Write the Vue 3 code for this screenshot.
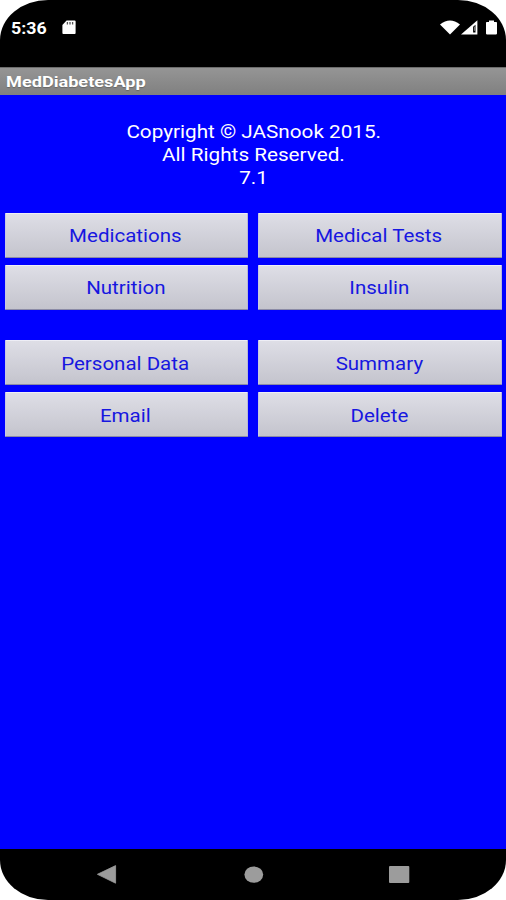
<script setup>
const groups = [
  ['Medications', 'Medical Tests', 'Nutrition', 'Insulin'],
  ['Personal Data', 'Summary', 'Email', 'Delete'],
]
const notice = ['Copyright © JASnook 2015.', 'All Rights Reserved.', '7.1']
</script>

<template>
  <div class="screen">
    <header class="status">
      <span class="time"><span class="wide">5:36</span></span>
      <svg class="sd" width="14" height="15" viewBox="0 0 14 15">
        <path d="M4.6 .5H12.6Q13.6 .5 13.6 1.5V13Q13.6 14 12.6 14H1.4Q.4 14 .4 13V5Z" fill="#fff" />
        <path d="M5.4 2V4.6M8 2V4.6M10.6 2V4.6" stroke="#555" stroke-width="1.3" />
      </svg>
      <svg class="signals" width="60" height="16" viewBox="0 0 60 16">
        <path d="M0 4.6Q10 -3.4 20 4.6L10 14.6Z" fill="#fff" />
        <path d="M21 14.5L37.4 .2V14.5Z" fill="#fff" />
        <path d="M33.1 6.8L35.5 4.8V12.4H33.1Z" fill="#000" />
        <path d="M34.6 6.6V10.8" stroke="#bbb" stroke-width=".7" />
        <path d="M46.8 2H49V.4H54V2H56.2Q57 2 57 2.8V13.6Q57 14.4 56.2 14.4H46.8Q46 14.4 46 13.6V2.8Q46 2 46.8 2Z" fill="#fff" />
      </svg>
    </header>
    <div class="title"><span class="wide">MedDiabetesApp</span></div>
    <main class="content">
      <div class="notice">
        <p v-for="line in notice" :key="line"><span class="wide">{{ line }}</span></p>
      </div>
      <div v-for="(group, i) in groups" :key="i" class="group">
        <button v-for="label in group" :key="label" type="button">
          <span class="wide">{{ label }}</span>
        </button>
      </div>
    </main>
    <nav class="nav">
      <svg width="506" height="51" viewBox="0 0 506 51">
        <path d="M97.4 25.3L115.6 16.6V34.2Z" fill="#9c9c9c" stroke="#9c9c9c" stroke-width=".8" stroke-linejoin="round" />
        <ellipse cx="253.8" cy="25.6" rx="9.4" ry="8.2" fill="#9c9c9c" />
        <rect x="389" y="17" width="20.3" height="17" rx="1" fill="#9c9c9c" />
      </svg>
    </nav>
  </div>
</template>

<style>
body {
  margin: 0;
  background: #fff;
}
</style>

<style scoped>
.screen {
  width: 506px;
  height: 900px;
  display: flex;
  flex-direction: column;
  overflow: hidden;
  border-radius: 48px / 40px;
  background: #000;
  font-family: Roboto, sans-serif;
}
.wide {
  display: inline-block;
  transform: scaleX(1.15);
}
.status {
  box-sizing: border-box;
  height: 67px;
  display: flex;
  align-items: flex-start;
  padding: 20px 6px 0 11px;
  color: #fff;
}
.time {
  width: 51px;
  font-size: 16px;
  font-weight: 700;
  line-height: 17px;
}
.time .wide,
.title .wide {
  transform-origin: left;
}
.time .wide {
  transform: scaleX(1.11);
}
.title .wide {
  transform: scaleX(1.17);
}
.signals {
  margin-left: auto;
}
.title {
  box-sizing: border-box;
  height: 28px;
  padding-left: 6px;
  background: linear-gradient(#959595, #808080);
  border-top: 1px solid #6c6c6c;
  color: #fff;
  font-size: 15.5px;
  font-weight: 700;
  line-height: 28px;
  text-shadow: 0 1px 1px #666;
}
.content {
  flex: 1;
  padding: 25px 4.5px 0 5px;
  background: #00f;
}
.notice {
  height: 93px;
  color: #fff;
  font-size: 18px;
  line-height: 23px;
  text-align: center;
}
.notice p {
  margin: 0;
}
.group {
  display: grid;
  grid-template-columns: 1fr 1fr;
  grid-auto-rows: 45px;
  gap: 7px 10px;
  margin-bottom: 30px;
}
button {
  padding: 0 2px 1px 0;
  border: 1px solid;
  border-color: #eeeef6 #b8b8d8 #8b8ba6 #c8c8e4;
  border-radius: 1px;
  background: linear-gradient(#dedee6, #c4c4cd);
  color: #1717e0;
  font: 18px Roboto, sans-serif;
}
button .wide {
  transform: scaleX(1.14);
}
.group + .group button {
  padding-bottom: 0;
  padding-top: 1px;
}
.nav {
  height: 51px;
}
.nav svg {
  display: block;
}
</style>
